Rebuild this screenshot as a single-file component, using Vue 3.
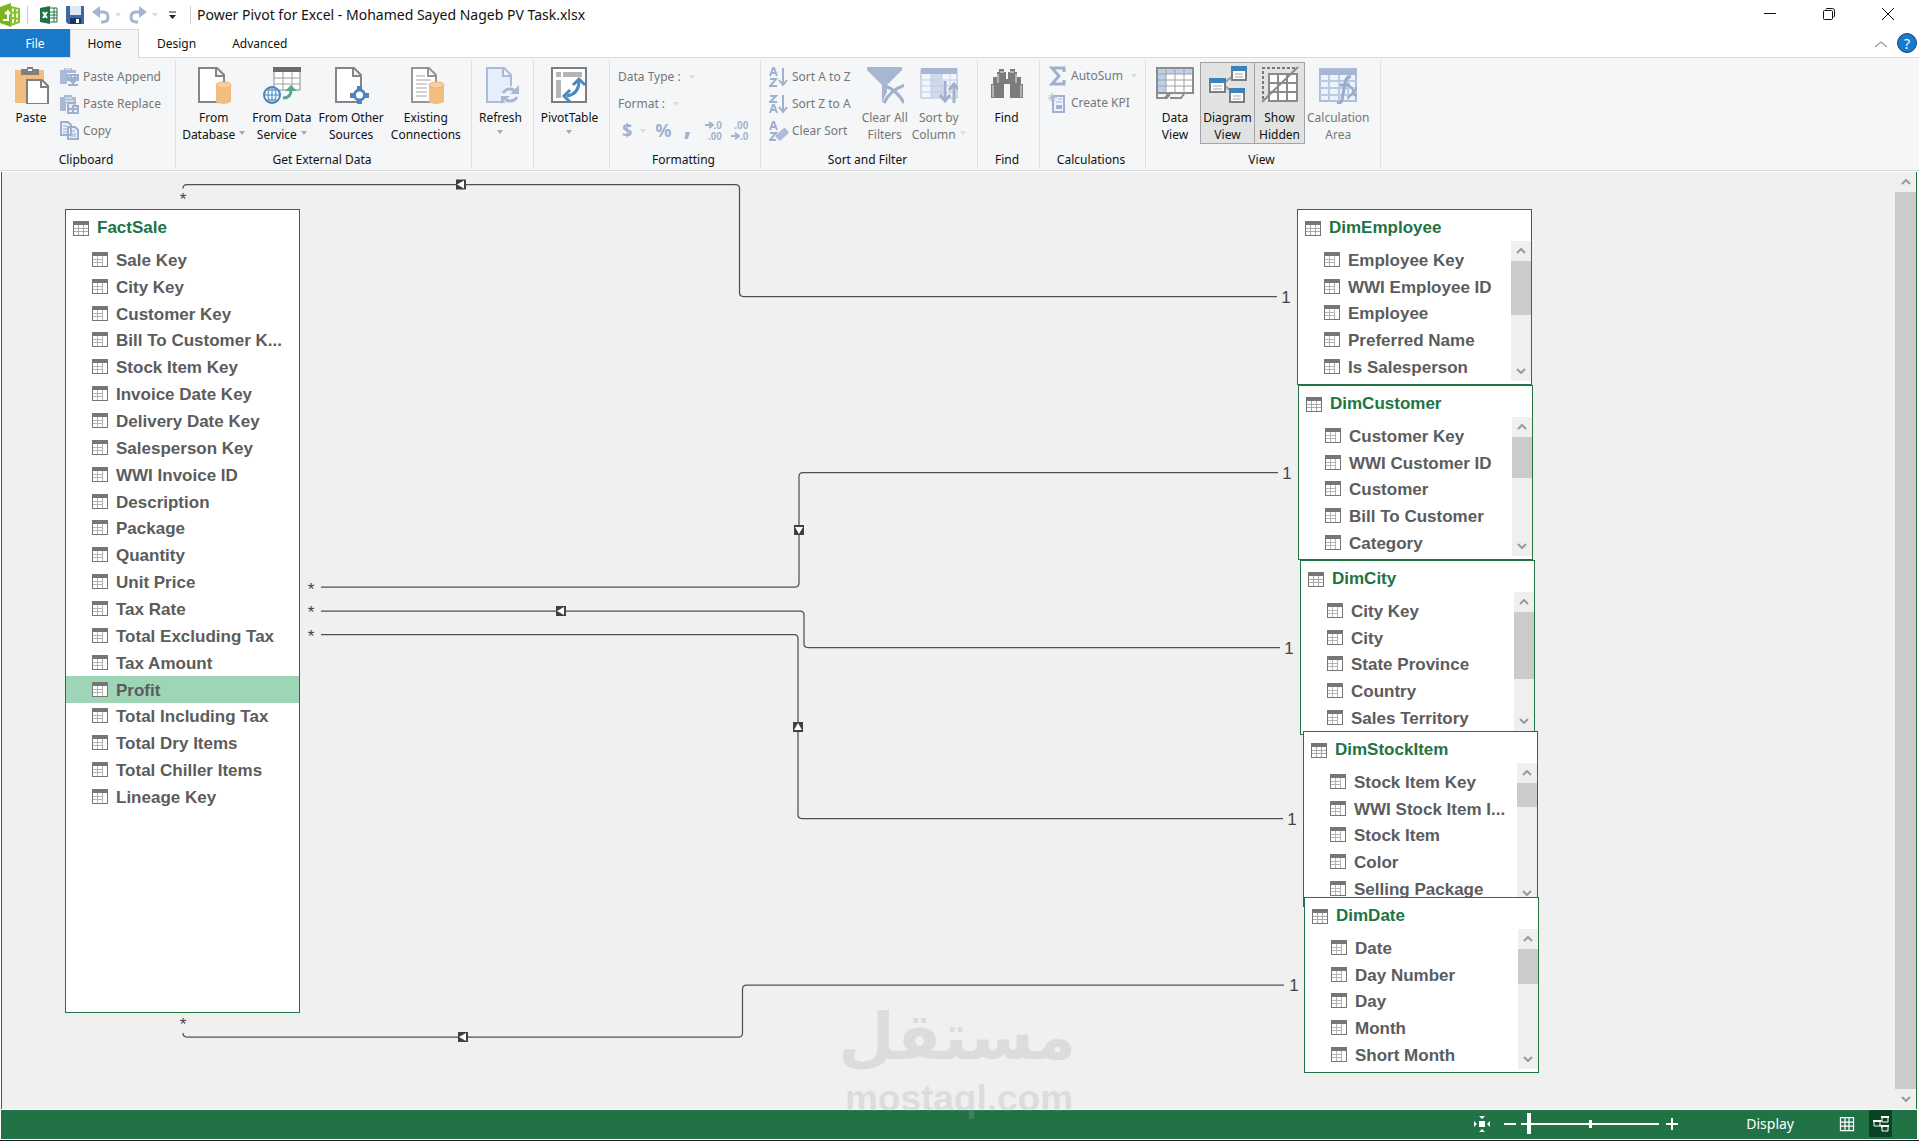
<script setup>
import { ref } from 'vue'

const zoom = ref(0)
const activeTab = ref('Home')
const selected = ref('Profit')
const tabs = ['Home', 'Design', 'Advanced']

const externalData = [
  { icon: 'database', lines: ['From', 'Database'], menu: true },
  { icon: 'service', lines: ['From Data', 'Service'], menu: true },
  { icon: 'sources', lines: ['From Other', 'Sources'] },
  { icon: 'existing', lines: ['Existing', 'Connections'] }
]
const views = [
  { icon: 'dataview', lines: ['Data', 'View'] },
  { icon: 'diagram', lines: ['Diagram', 'View'], on: true },
  { icon: 'hidden', lines: ['Show', 'Hidden'], on: true },
  { icon: 'calcarea', lines: ['Calculation', 'Area'], off: true }
]

// positions on the diagram canvas
const tables = [
  {
    name: 'FactSale', x: 63, y: 37, width: 235, height: 804, list: 564,
    fields: ['Sale Key', 'City Key', 'Customer Key', 'Bill To Customer K...', 'Stock Item Key', 'Invoice Date Key',
      'Delivery Date Key', 'Salesperson Key', 'WWI Invoice ID', 'Description', 'Package', 'Quantity', 'Unit Price',
      'Tax Rate', 'Total Excluding Tax', 'Tax Amount', 'Profit', 'Total Including Tax', 'Total Dry Items',
      'Total Chiller Items', 'Lineage Key']
  },
  {
    name: 'DimEmployee', x: 1295, y: 37, width: 235, height: 176, list: 134, thumb: 54,
    fields: ['Employee Key', 'WWI Employee ID', 'Employee', 'Preferred Name', 'Is Salesperson']
  },
  {
    name: 'DimCustomer', x: 1296, y: 213, width: 235, height: 175, list: 134, thumb: 41,
    fields: ['Customer Key', 'WWI Customer ID', 'Customer', 'Bill To Customer', 'Category']
  },
  {
    name: 'DimCity', x: 1298, y: 388, width: 235, height: 175, list: 134, thumb: 67,
    fields: ['City Key', 'City', 'State Province', 'Country', 'Sales Territory']
  },
  {
    name: 'DimStockItem', x: 1301, y: 559, width: 235, height: 176, list: 134, thumb: 24,
    fields: ['Stock Item Key', 'WWI Stock Item I...', 'Stock Item', 'Color', 'Selling Package']
  },
  {
    name: 'DimDate', x: 1302, y: 725, width: 235, height: 176, list: 134, thumb: 35,
    fields: ['Date', 'Day Number', 'Day', 'Month', 'Short Month']
  }
]

const relations = [
  { x1: 181, y1: 12.5, mid: 737.5, x2: 1275, y2: 124.5, tail: 1, star: [181, 33], one: 1284, arrow: [459, 12.5, 0] },
  { x1: 319, y1: 415, mid: 797, x2: 1276, y2: 300.5, star: [309, 423], one: 1285, arrow: [797, 358, -90] },
  { x1: 319, y1: 439, mid: 802, x2: 1278, y2: 475.5, star: [309, 446], one: 1287, arrow: [559, 439, 0] },
  { x1: 319, y1: 462.5, mid: 796, x2: 1281, y2: 646.5, star: [309, 470], one: 1290, arrow: [796, 555, 90] },
  { x1: 181, y1: 865, mid: 740.5, x2: 1282, y2: 813, tail: -1, star: [181, 858], one: 1292, arrow: [461, 865, 0] }
]

function route(r) {
  const s = Math.sign(r.y2 - r.y1) * 4
  const start = r.tail
    ? `M${r.x1} ${r.y1 + 4 * r.tail}Q${r.x1} ${r.y1} ${r.x1 + 4} ${r.y1}`
    : `M${r.x1} ${r.y1}`
  return `${start}H${r.mid - 4}Q${r.mid} ${r.y1} ${r.mid} ${r.y1 + s}V${r.y2 - s}Q${r.mid} ${r.y2} ${r.mid + 4} ${r.y2}H${r.x2}`
}
function box(t) {
  return { left: t.x + 'px', top: t.y + 'px', width: t.width + 'px', height: t.height + 'px' }
}
</script>

<template>
  <svg class="symbols" aria-hidden="true">
    <symbol id="paste" viewBox="0 0 38 38">
      <path d="M3 4h29v33H3z" fill="#f4bd80" />
      <path d="M9 3h6V1h6v2h6v6H9z" fill="#7f7f7f" /><path d="M16 3h4v2h-4z" fill="#fff" />
      <path d="M15 14h15l6 6v18H15z" fill="#fff" stroke="#7f7f7f" stroke-width="2" /><path d="M29 14v7h7" fill="none" stroke="#7f7f7f" stroke-width="2" />
    </symbol>
    <symbol id="append" viewBox="0 0 20 20">
      <path d="M0 3h4V1h8v2h4v3H7v11H0z" fill="#a9bad6" /><path d="M5 2h6" stroke="#f4f6f8" />
      <path d="M8 8h10v5H8zM11 8v5M15 8v5M8 11h10M10 13l3 3 3-3M8 18h10" fill="none" stroke="#9fb0ce" stroke-width="2" />
    </symbol>
    <symbol id="replace" viewBox="0 0 20 20">
      <path d="M0 3h4V1h8v2h4v6H6v8H0z" fill="#a9bad6" /><path d="M5 4h7M5 7h9" stroke="#f4f6f8" />
      <path d="M8 9h7v3h3v7H8z" fill="#e7edf7" stroke="#9fb0ce" stroke-width="2" /><path d="M8 15h10M13 11v8" stroke="#9fb0ce" stroke-width="2" />
    </symbol>
    <symbol id="copy" viewBox="0 0 20 20">
      <path d="M1 1h7l3 3v10H1zM8 6h7l3 3v9H8z" fill="#e9f0fa" stroke="#9fb0ce" stroke-width="2" />
      <path d="M3 5h4M3 8h4M3 11h4M10 10h5M10 13h6M10 15h6" stroke="#9fb0ce" />
    </symbol>
    <symbol id="database" viewBox="0 0 38 38">
      <path d="M4 2h18l7 7v27H4zM21 2v8h8" fill="#fff" stroke="#858585" stroke-width="2" />
      <path d="M21 20v16q7 4 15 0V20z" fill="#f3bd7f" /><ellipse cx="28.500" cy="19" rx="7.500" ry="3" fill="#f8cf9f" stroke="#f0b26d" />
    </symbol>
    <symbol id="service" viewBox="0 0 38 38">
      <path d="M11 2h26v22H11z" fill="#fff" stroke="#8a8a8a" /><path d="M10 1h28v5H10z" fill="#6b6b6b" />
      <path d="M11 12h26M11 18h26M20 6v18M29 6v18" stroke="#a0a0a0" />
      <circle cx="9" cy="29" r="8" fill="#f4f6f8" stroke="#4a86bd" stroke-width="2" /><path d="M1 29h16M9 21v16M3 24h12M3 34h12" stroke="#4a86bd" /><ellipse cx="9" cy="29" rx="4" ry="8" fill="none" stroke="#4a86bd" />
      <path d="M20 32q8 0 8-8" fill="none" stroke="#5ba888" stroke-width="3" /><path d="M22 25l6-6 6 6z" fill="#5ba888" />
    </symbol>
    <symbol id="sources" viewBox="0 0 38 38">
      <path d="M4 2h18l7 7v27H4zM21 2v8h8" fill="#fff" stroke="#858585" stroke-width="2" />
      <circle cx="27.500" cy="29" r="5" fill="#fff" stroke="#4a86bd" stroke-width="3" />
      <path d="M25 20h5v4h-5zM25 34h5v4h-5zM18 27h4v5h-4zM33 27h4v5h-4z" fill="#4a86bd" />
    </symbol>
    <symbol id="existing" viewBox="0 0 38 38">
      <path d="M5 2h17l7 7v27H5zM21 2v8h8" fill="#fff" stroke="#969696" stroke-width="2" />
      <path d="M9 10h9M9 14h15M9 18h11M9 22h11M9 26h11M9 30h11" stroke="#a5a5a5" />
      <path d="M22 20v16q7 4 15 0V20z" fill="#f3bd7f" /><ellipse cx="29.500" cy="19" rx="7.500" ry="3" fill="#f8cf9f" stroke="#f0b26d" />
    </symbol>
    <symbol id="refresh" viewBox="0 0 38 38">
      <path d="M6 2h17l7 7v27H6zM22 2v8h8" fill="#e6eefb" stroke="#a9bbd9" stroke-width="2" />
      <circle cx="29" cy="29" r="9" fill="#f0f4fa" /><path d="M22 27q4-6 11-3M36 31q-4 6-11 3" fill="none" stroke="#a6b8d4" stroke-width="3" />
      <path d="M38 19v9h-9zM20 38v-8h9z" fill="#a6b8d4" />
    </symbol>
    <symbol id="pivot" viewBox="0 0 38 38">
      <path d="M2 2h34v34H2z" fill="#fff" stroke="#7d7d7d" stroke-width="2" />
      <path d="M6 6h5v5H6zM13 6h19v5H13zM6 14h5v18H6z" fill="#b5b5b5" />
      <path d="M17 30q12-2 12-15" fill="none" stroke="#4a8abf" stroke-width="3" /><path d="M23 19l6-6 6 6M20 24l-6 6 6 6" fill="none" stroke="#4a8abf" stroke-width="3" />
    </symbol>
    <symbol id="sortaz" viewBox="0 0 20 20">
      <path d="M1 9l3-8h1l3 8M2 6h5M1 12h6l-6 7h7M14 1v15M10 13l4 5 4-5" fill="none" stroke="#a0b1cf" stroke-width="2" />
    </symbol>
    <symbol id="sortza" viewBox="0 0 20 20">
      <path d="M1 2h6l-6 6h7M1 19l3-8h1l3 8M2 16h5M14 1v15M10 13l4 5 4-5" fill="none" stroke="#a0b1cf" stroke-width="2" />
    </symbol>
    <symbol id="clearsort" viewBox="0 0 20 20">
      <path d="M1 9l3-8h1l3 8M2 6h5M1 12h6l-6 7h6" fill="none" stroke="#a0b1cf" stroke-width="2" />
      <rect x="7" y="10" width="13" height="7" rx="2" transform="rotate(-42 13 14)" fill="#acbdd8" />
    </symbol>
    <symbol id="filter" viewBox="0 0 38 38">
      <path d="M1 1h35v3L21 19v7l-5 11V19L1 4z" fill="#a7b7d1" /><path d="M19 20q12 4 19 17M39 19Q24 24 18 37" fill="none" stroke="#a0b1ce" stroke-width="3" />
    </symbol>
    <symbol id="sortby" viewBox="0 0 38 38">
      <path d="M1 3h36v29H1z" fill="#f0f6fe" stroke="#a9b9d2" /><path d="M1 2h36v6H1z" fill="#a7b7d1" /><path d="M11 8h11v24H11z" fill="#cfdbeb" />
      <path d="M1 14h36M1 20h36M1 26h36M11 8v24M22 8v24M30 8v24" stroke="#c1cfe2" />
      <path d="M25 15v20M20 29l5 6 5-6M34 37V18M29 24l5-6 5 6" fill="none" stroke="#a0b1ce" stroke-width="3" />
    </symbol>
    <symbol id="find" viewBox="0 0 38 38">
      <path d="M11 3h5v3h2v7h2V6h2V3h5v3h2v5h4v7h2v14H22v-14h-6v14H3V18h2v-7h4V6h2z" fill="#7c7c7c" /><path d="M5 19v12M33 19v12M10 8v9M28 8v9M12 6h4M22 6h4" stroke="#e9e9e9" />
    </symbol>
    <symbol id="sum" viewBox="0 0 20 20">
      <path d="M16 6V2H4l7 8-7 8h12v-4" fill="none" stroke="#a0b1cf" stroke-width="3" />
    </symbol>
    <symbol id="kpi" viewBox="0 0 20 20">
      <path d="M5 3h11v16H5z" fill="#edf3fb" stroke="#a0b1cf" stroke-width="2" /><path d="M10 6h4M8 9h6" stroke="#a0b1cf" /><path d="M8 12h6v4H8z" fill="#a0b1cf" />
      <path d="M0 5h9M4 0v9M1 2l6 6M7 2L1 8" stroke="#a9b9d4" />
    </symbol>
    <symbol id="dataview" viewBox="0 0 38 38">
      <path d="M1 2h36v25H1z" fill="#fff" stroke="#8c8c8c" stroke-width="2" /><path d="M2 3h34v5H2zM2 8h8v18H2z" fill="#bdd0ea" />
      <path d="M2 8h34M2 14h34M2 20h34M10 2v25M19 2v25M28 2v25" stroke="#a0a0a0" />
      <path d="M1 28v4h10l3-4M14 32h11l3-4M1 32h8l3-4" fill="none" stroke="#8c8c8c" stroke-width="2" />
    </symbol>
    <symbol id="diagram" viewBox="0 0 38 38">
      <path d="M16 16l8-6M16 20l7 6" stroke="#999" stroke-width="2" />
      <path d="M23 1h14v13H23zM1 13h15v13H1zM21 23h14v13H21z" fill="#fff" stroke="#7d7d7d" stroke-width="2" />
      <path d="M22 0h16v5H22zM0 12h17v5H0zM20 22h16v5H20z" fill="#3f82b8" /><path d="M26 8h8M26 11h8M4 20h9M4 23h9M24 30h8M24 33h8" stroke="#a5a5a5" />
    </symbol>
    <symbol id="hidden" viewBox="0 0 38 38">
      <path d="M2 33V2h34" fill="none" stroke="#777" stroke-width="2" stroke-dasharray="3 2" />
      <path d="M8 8h28v27H8z" fill="#fff" stroke="#8a8a8a" stroke-width="2" /><path d="M8 17h28M8 26h28M17 8v27M26 8v27" stroke="#8a8a8a" stroke-width="2" /><path d="M1 36L37 1" stroke="#8a8a8a" stroke-width="2" />
    </symbol>
    <symbol id="calcarea" viewBox="0 0 38 38">
      <path d="M1 3h36v32H1z" fill="#eaf2fd" stroke="#afbfd8" stroke-width="2" /><path d="M0 3h38v6H0z" fill="#a7b7d1" />
      <path d="M1 15h36M1 22h36M1 29h36M10 9v26M20 9v26M29 9v26" stroke="#bccae0" stroke-width="2" />
      <path d="M32 11q-5-1-6 6l-3 17q-1 4-5 3M21 19h10" fill="none" stroke="#98aaca" stroke-width="3" /><path d="M30 21q3-1 4 4t5 5M39 21l-10 11" fill="none" stroke="#98aaca" stroke-width="2" />
    </symbol>
    <symbol id="right" viewBox="0 0 9 8"><path d="M0 4h6M4 1l4 3-4 3" fill="none" stroke="#a0b1cf" stroke-width="2" /></symbol>
    <symbol id="table" viewBox="0 0 16 15">
      <path d="M0 0h16v15H0z" fill="#767676" /><path d="M1 4h14v10H1z" fill="#fff" />
      <path d="M1 7.500h14M1 10.500h14M5.500 4v10M10.500 4v10" stroke="#a8a8a8" />
    </symbol>
    <symbol id="column" viewBox="0 0 16 15">
      <path d="M0 0h16v15H0z" fill="#767676" /><path d="M1 4h14v10H1z" fill="#fff" />
      <path d="M1 7.500h10M1 10.500h10M5.500 4v10M10.500 4v10" stroke="#b4b4b4" />
    </symbol>
    <symbol id="up" viewBox="0 0 10 6"><path d="M1 5l4-4 4 4" fill="none" stroke="#9a9a9a" stroke-width="2" /></symbol>
    <symbol id="down" viewBox="0 0 10 6"><path d="M1 1l4 4 4-4" fill="none" stroke="#9a9a9a" stroke-width="2" /></symbol>
  </svg>

  <div class="window">
    <header class="titlebar">
      <svg class="logo" viewBox="0 0 21 24">
        <path d="M0 4l11-4v24L0 20z" fill="#78b51f" /><path d="M11 4l8 2v13l-8 3z" fill="#f4fbe9" stroke="#86c32c" stroke-width="2" /><path d="M11 10l9-1M11 15l9 1M15 4v16" stroke="#86c32c" stroke-width="2" />
        <path d="M3 17h5V8M5 11l3-3 2 3" fill="none" stroke="#fff" stroke-width="2" />
      </svg>
      <i class="rule"></i>
      <svg class="qat excel" viewBox="0 0 18 18">
        <path d="M0 2l10-2v18L0 16z" fill="#217346" /><path d="M10 2h7v14h-7M10 6h7M10 9h7M10 12h7M14 2v14" fill="none" stroke="#217346" /><path d="M3 6l4 6M7 6l-4 6" stroke="#fff" stroke-width="2" />
      </svg>
      <button class="tool" aria-label="Save">
        <svg class="qat" viewBox="0 0 18 18"><path d="M0 0h18v18H2l-2-2z" fill="#3d68a8" /><path d="M4 0h11v9H4z" fill="#dce9f5" /><path d="M4 12h11v6H4z" fill="#1f365d" /><path d="M10 13h3v4h-3z" fill="#fff" /></svg>
      </button>
      <button class="tool undo" aria-label="Undo">
        <svg class="qat" viewBox="0 0 18 18"><path d="M4 6h7q5 0 5 5t-5 5H9" fill="none" stroke="#a4b6d2" stroke-width="3" /><path d="M8 0v12L0 6z" fill="#a4b6d2" /></svg>
        <i class="caret faint"></i>
      </button>
      <button class="tool undo" aria-label="Redo">
        <svg class="qat" viewBox="0 0 18 18"><path d="M14 6H7q-5 0-5 5t5 5h2" fill="none" stroke="#a4b6d2" stroke-width="3" /><path d="M10 0v12l8-6z" fill="#a4b6d2" /></svg>
        <i class="caret faint"></i>
      </button>
      <button class="tool" aria-label="Customize toolbar">
        <svg class="custom" viewBox="0 0 7 8"><path d="M0 1h7" stroke="#222" /><path d="M0 4h7L3.500 8z" fill="#222" /></svg>
      </button>
      <i class="rule"></i>
      <span class="caption">Power Pivot for Excel - Mohamed Sayed Nageb PV Task.xlsx</span>
      <div class="controls">
        <button aria-label="Minimize"><svg viewBox="0 0 12 12"><path d="M0 5.500h12" stroke="#111" /></svg></button>
        <button aria-label="Restore"><svg viewBox="0 0 12 12"><path d="M3 1.500q0-1 1-1h5.500q2 0 2 2V8q0 1-1 1" fill="none" stroke="#111" /><rect x=".5" y="2.500" width="9" height="9" rx="1" fill="#fff" stroke="#111" /></svg></button>
        <button aria-label="Close"><svg viewBox="0 0 12 12"><path d="M0 0l12 12M12 0L0 12" stroke="#111" /></svg></button>
      </div>
    </header>

    <nav class="tabs">
      <button class="tab file">File</button>
      <button v-for="t in tabs" :key="t" class="tab" :class="{ active: t === activeTab }" @click="activeTab = t">{{ t }}</button>
      <div class="help">
        <button aria-label="Collapse ribbon"><svg class="collapse" viewBox="0 0 12 7"><path d="M0 6l6-5 6 5" fill="none" stroke="#999" stroke-width="1.250" /></svg></button>
        <button class="question" aria-label="Help">?</button>
      </div>
    </nav>

    <section class="ribbon">
      <div class="group clipboard">
        <div class="body">
          <button class="big"><svg class="large"><use href="#paste" /></svg><span>Paste</span></button>
          <div class="stack">
            <button class="small" disabled><svg class="little"><use href="#append" /></svg>Paste Append</button>
            <button class="small" disabled><svg class="little"><use href="#replace" /></svg>Paste Replace</button>
            <button class="small" disabled><svg class="little"><use href="#copy" /></svg>Copy</button>
          </div>
        </div>
        <div class="name">Clipboard</div>
      </div>
      <div class="group external">
        <div class="body">
          <button v-for="b in externalData" :key="b.icon" class="big">
            <svg class="large"><use :href="'#' + b.icon" /></svg>
            <span>{{ b.lines[0] }}</span>
            <span>{{ b.lines[1] }}<i v-if="b.menu" class="caret side"></i></span>
          </button>
        </div>
        <div class="name">Get External Data</div>
      </div>
      <div class="group refresh">
        <div class="body">
          <button class="big"><svg class="large"><use href="#refresh" /></svg><span>Refresh</span><i class="caret under"></i></button>
        </div>
      </div>
      <div class="group pivot">
        <div class="body">
          <button class="big"><svg class="large"><use href="#pivot" /></svg><span>PivotTable</span><i class="caret under"></i></button>
        </div>
      </div>
      <div class="group formatting">
        <div class="body">
          <div class="stack">
            <button class="small" disabled>Data Type :<i class="caret faint wide"></i></button>
            <button class="small" disabled>Format :<i class="caret faint wide"></i></button>
            <div class="numbers">
              <button disabled>$<i class="caret faint wide"></i></button>
              <button disabled>%</button>
              <button disabled class="comma">,</button>
              <button disabled class="decimals">
                <span><svg class="right"><use href="#right" /></svg>.0</span>
                <span>.00</span>
              </button>
              <button disabled class="decimals">
                <span>.00</span>
                <span><svg class="right"><use href="#right" /></svg>.0</span>
              </button>
            </div>
          </div>
        </div>
        <div class="name">Formatting</div>
      </div>
      <div class="group sorting">
        <div class="body">
          <div class="stack">
            <button class="small" disabled><svg class="little"><use href="#sortaz" /></svg>Sort A to Z</button>
            <button class="small" disabled><svg class="little"><use href="#sortza" /></svg>Sort Z to A</button>
            <button class="small" disabled><svg class="little"><use href="#clearsort" /></svg>Clear Sort</button>
          </div>
          <button class="big" disabled><svg class="large"><use href="#filter" /></svg><span>Clear All</span><span>Filters</span></button>
          <button class="big" disabled><svg class="large"><use href="#sortby" /></svg><span>Sort by</span><span>Column<i class="caret side faint"></i></span></button>
        </div>
        <div class="name">Sort and Filter</div>
      </div>
      <div class="group finding">
        <div class="body">
          <button class="big"><svg class="large"><use href="#find" /></svg><span>Find</span></button>
        </div>
        <div class="name">Find</div>
      </div>
      <div class="group calculations">
        <div class="body">
          <div class="stack">
            <button class="small" disabled><svg class="little"><use href="#sum" /></svg>AutoSum<i class="caret faint wide"></i></button>
            <button class="small" disabled><svg class="little"><use href="#kpi" /></svg>Create KPI</button>
          </div>
        </div>
        <div class="name">Calculations</div>
      </div>
      <div class="group viewing">
        <div class="body">
          <button v-for="b in views" :key="b.icon" class="big" :class="[b.icon, { on: b.on }]" :disabled="b.off">
            <svg class="large"><use :href="'#' + b.icon" /></svg>
            <span v-for="l in b.lines" :key="l">{{ l }}</span>
          </button>
        </div>
        <div class="name">View</div>
      </div>
    </section>

    <main class="pane">
      <div class="canvas">
        <svg class="relations">
          <g v-for="r in relations" :key="r.y1">
            <path :d="route(r)" fill="none" stroke="#505050" stroke-width="1.250" />
            <g :transform="`translate(${r.arrow[0]} ${r.arrow[1]}) rotate(${r.arrow[2]})`">
              <rect x="-5" y="-5" width="10" height="10" fill="#404040" />
              <path d="M-4 0L3-4V4z" fill="#fff" />
            </g>
            <text :x="r.star[0]" :y="r.star[1]">*</text>
            <text :x="r.one" :y="r.y2 + 6">1</text>
          </g>
        </svg>
        <article v-for="t in tables" :key="t.name" class="entity" :style="box(t)">
          <h2><svg class="glyph"><use href="#table" /></svg>{{ t.name }}</h2>
          <ul :style="{ height: t.list + 'px' }">
            <li v-for="f in t.fields" :key="f" :class="{ selected: f === selected }" @click="selected = f">
              <svg class="glyph"><use href="#column" /></svg><span>{{ f }}</span>
            </li>
          </ul>
          <div v-if="t.thumb" class="scroll inner">
            <svg class="arrow"><use href="#up" /></svg>
            <div class="thumb" :style="{ height: t.thumb + 'px' }"></div>
            <svg class="arrow last"><use href="#down" /></svg>
          </div>
        </article>
      </div>
      <div class="scroll">
        <svg class="arrow"><use href="#up" /></svg>
        <div class="thumb full"></div>
        <svg class="arrow last"><use href="#down" /></svg>
      </div>
      <div class="watermark">
        <div class="arabic" lang="ar" dir="rtl">مستقل</div>
        <div class="latin">mostaql.com</div>
      </div>
    </main>

    <footer class="status">
      <button class="fit" aria-label="Fit to screen">
        <svg viewBox="0 0 16 16"><path d="M5 5h6v6H5zM5 0h6L8 3zM5 16h6L8 13zM0 5v6l3-3zM16 5v6l-3-3z" fill="#fff" /></svg>
      </button>
      <button class="step" aria-label="Zoom out"><svg viewBox="0 0 12 12"><path d="M0 6h12" stroke="#fff" stroke-width="2" /></svg></button>
      <input v-model="zoom" class="zoom" type="range" min="0" max="100" aria-label="Zoom">
      <button class="step" aria-label="Zoom in"><svg viewBox="0 0 12 12"><path d="M0 6h12M6 0v12" stroke="#fff" stroke-width="2" /></svg></button>
      <button class="display">Display</button>
      <button class="mode" aria-label="Data view">
        <svg viewBox="0 0 16 16"><path d="M1.500 1.500h13v13h-13zM1.500 6h13M1.500 10h13M6 1.500v13M10 1.500v13" fill="none" stroke="#fff" stroke-width="1.250" /></svg>
      </button>
      <button class="mode on" aria-label="Diagram view">
        <svg viewBox="0 0 16 16"><path d="M1 5h6v5H1zM9 1h6v5H9zM9 10h6v5H9zM7 6l2-2M7 9l2 3" fill="none" stroke="#fff" /><path d="M0 5h8M8 1h8M8 10h8" stroke="#fff" stroke-width="2" /></svg>
      </button>
    </footer>
  </div>
</template>

<style>
body {
  margin: 0;
  overflow: hidden;
}
</style>

<style scoped>
* {
  box-sizing: border-box;
}
button {
  border: 0;
  padding: 0;
  background: none;
  font: inherit;
  color: inherit;
}
.symbols {
  position: absolute;
  width: 0;
  height: 0;
}
.window {
  display: flex;
  flex-direction: column;
  height: 100vh;
  background: #fff;
  border-bottom: 1px solid #1b1b2b;
  font: 12px/17px "Noto Sans", sans-serif;
  color: #111;
}

/* title bar */
.titlebar {
  display: flex;
  align-items: center;
  height: 29px;
}
.logo {
  width: 21px;
  height: 24px;
}
.rule {
  width: 1px;
  height: 18px;
  margin: 0 6px;
  background: #ccc;
}
.qat {
  width: 18px;
  height: 18px;
}
.excel {
  margin: 0 8px 0 6px;
}
.tool {
  display: flex;
  align-items: center;
  margin-right: 8px;
}
.undo {
  gap: 5px;
}
.custom {
  width: 7px;
  height: 8px;
  margin-left: 3px;
}
.caption {
  font-size: 14px;
}
.controls {
  display: flex;
  margin-left: auto;
  margin-right: 2px;
  padding-top: 1px;
}
.controls button {
  width: 59px;
}
.controls svg {
  width: 12px;
  height: 12px;
}
.caret {
  display: inline-block;
  border: 3px solid transparent;
  border-top: 4px solid #aaa;
  border-bottom: 0;
}
.caret.faint {
  border-top-color: #dcdcdc;
}

/* tabs */
.tabs {
  display: flex;
  height: 29px;
  border-bottom: 1px solid #d8dbdb;
}
.tab {
  height: 29px;
  padding: 0 17px 2px;
  border: 1px solid transparent;
  border-bottom: 0;
}
.tab.file {
  width: 70px;
  height: 28px;
  padding: 0;
  background: #1979ca;
  color: #fff;
}
.tab.active {
  width: 69px;
  padding: 0 0 2px;
  background: #f4f6f8;
  border-color: #d8dbdb;
}
.help {
  display: flex;
  align-items: center;
  gap: 10px;
  margin-left: auto;
  padding-right: 2px;
}
.collapse {
  width: 12px;
  height: 7px;
}
.question {
  width: 20px;
  height: 20px;
  border: 1px solid #16417c;
  border-radius: 50%;
  background: #1979ca;
  color: #fff;
  font-size: 14px;
}

/* ribbon */
.ribbon {
  display: flex;
  height: 113px;
  padding: 2px 0;
  background: #f4f6f8;
  border-bottom: 1px solid #d6d8d8;
}
.group {
  display: flex;
  flex-direction: column;
  justify-content: space-between;
  padding-top: 2px;
  border-right: 1px solid #dfe1e3;
}
.body {
  display: flex;
  justify-content: center;
  padding-right: 4px;
}
.name {
  padding-right: 3px;
  text-align: center;
}
.clipboard {
  width: 176px;
}
.external {
  width: 296px;
}
.external .body {
  gap: 3px;
}
.refresh {
  width: 62px;
}
.pivot {
  width: 76px;
}
.formatting {
  width: 151px;
}
.sorting {
  width: 217px;
}
.finding {
  width: 62px;
}
.calculations {
  width: 106px;
}
.viewing {
  width: 235px;
}
.clipboard .body,
.formatting .body,
.sorting .body,
.calculations .body,
.viewing .body {
  justify-content: flex-start;
  padding: 0 0 0 8px;
}
.clipboard .body {
  padding-left: 10px;
}
.big {
  display: flex;
  flex-direction: column;
  align-items: center;
  height: 82px;
  padding: 3px 1px 0;
  border: 1px solid transparent;
  white-space: nowrap;
}
.big.on {
  background: #e1e3e2;
  border-color: #a3a5a4;
}
.big.dataview {
  margin-right: 4px;
}
.big.diagram {
  width: 55px;
}
.big.hidden {
  width: 50px;
  border-left: 0;
}
.large {
  flex: none;
  width: 38px;
  height: 38px;
  margin-bottom: 5px;
}
.little {
  width: 20px;
  height: 20px;
  margin-right: 3px;
}
.side {
  margin-left: 4px;
  vertical-align: 4px;
}
.under {
  margin-top: 4px;
}
button:disabled {
  color: #767676;
}
.stack {
  padding-top: 1px;
}
.clipboard .stack {
  padding-left: 8px;
}
.sorting .stack {
  padding-right: 9px;
}
.calculations .stack {
  padding-top: 0;
}
.small {
  display: flex;
  align-items: center;
  height: 27px;
  white-space: nowrap;
}
.wide {
  margin-left: 8px;
}
.numbers {
  display: flex;
  align-items: center;
  height: 27px;
  padding-left: 4px;
  gap: 9px;
  font-size: 18px;
  font-weight: 700;
}
.numbers button {
  display: flex;
  align-items: center;
  color: #a0b1cf;
}
.numbers .comma {
  padding: 0 4px 12px 3px;
  font-size: 28px;
}
.numbers .decimals {
  flex-direction: column;
  align-items: flex-end;
  font: 700 10px/11px "Liberation Sans", sans-serif;
}
.decimals span {
  display: flex;
  align-items: center;
}
.right {
  width: 9px;
  height: 8px;
}

/* diagram */
.pane {
  display: flex;
  flex: 1;
  position: relative;
  margin: 1px 2px 1px 1px;
  border: solid #217346;
  border-width: 0 1px;
  background: #f0f0f0;
}
.canvas {
  flex: 1;
  position: relative;
}
.relations {
  position: absolute;
  width: 100%;
  height: 100%;
}
.relations text {
  font: 17px "Liberation Sans", sans-serif;
  fill: #444;
  text-anchor: middle;
}
.entity {
  position: absolute;
  background: #fff;
  border: 1px solid #217346;
  overflow: hidden;
  font: 700 17px/20px "Liberation Sans", sans-serif;
  color: #5c5c5c;
}
.entity h2 {
  display: flex;
  align-items: center;
  height: 36px;
  margin: 0;
  padding-left: 7px;
  font-size: 17px;
  color: #217346;
}
.entity ul {
  display: grid;
  grid-auto-rows: 1fr;
  margin: 0;
  padding: 0;
  list-style: none;
}
.entity li {
  display: flex;
  align-items: center;
  padding-left: 26px;
  white-space: nowrap;
}
.entity li span {
  padding-top: 3px;
}
.entity li.selected {
  background: #9fd5b7;
}
.glyph {
  width: 16px;
  height: 15px;
  margin-right: 8px;
}
.scroll {
  display: flex;
  flex-direction: column;
  width: 21px;
  background: #efefef;
}
.scroll.inner {
  position: absolute;
  top: 31px;
  right: 0;
  bottom: 3px;
  width: 20px;
}
.arrow {
  flex: none;
  width: 10px;
  height: 6px;
  margin: 7px auto;
}
.arrow.last {
  margin-top: auto;
}
.thumb {
  background: #cbcbcb;
}
.thumb.full {
  flex: 1;
}
.scroll .full + .last {
  margin-top: 7px;
}
.watermark {
  position: absolute;
  left: 840px;
  bottom: -12px;
  z-index: 1;
  width: 234px;
  opacity: .25;
  color: #a0a8a4;
  text-align: center;
}
.arabic {
  font: 700 65px/80px "DejaVu Sans", sans-serif;
}
.latin {
  font: 700 37px/44px "Liberation Sans", sans-serif;
}

/* status bar */
.status {
  display: flex;
  align-items: center;
  justify-content: flex-end;
  height: 29px;
  margin: 0 2px 1px 1px;
  padding: 0 25px 2px 0;
  background: #217346;
  color: #fff;
}
.status svg {
  display: block;
  width: 16px;
  height: 16px;
  margin: auto;
}
.status .step svg {
  width: 12px;
  height: 12px;
}
.fit {
  margin-right: 14px;
}
.zoom {
  appearance: none;
  width: 138px;
  height: 22px;
  margin: 0 7px 0 5px;
  background:
    linear-gradient(#fff, #fff) center / 100% 2px no-repeat,
    linear-gradient(#fff, #fff) center / 3px 8px no-repeat;
}
.zoom::-webkit-slider-thumb {
  appearance: none;
  width: 4px;
  height: 21px;
  margin-left: 6px;
  background: #fff;
}
.display {
  margin: 0 41px 0 68px;
  font-size: 14px;
}
.mode {
  width: 23px;
  height: 27px;
}
.mode + .mode {
  margin-left: 11px;
}
.mode.on {
  background: #0a4424;
}
</style>
